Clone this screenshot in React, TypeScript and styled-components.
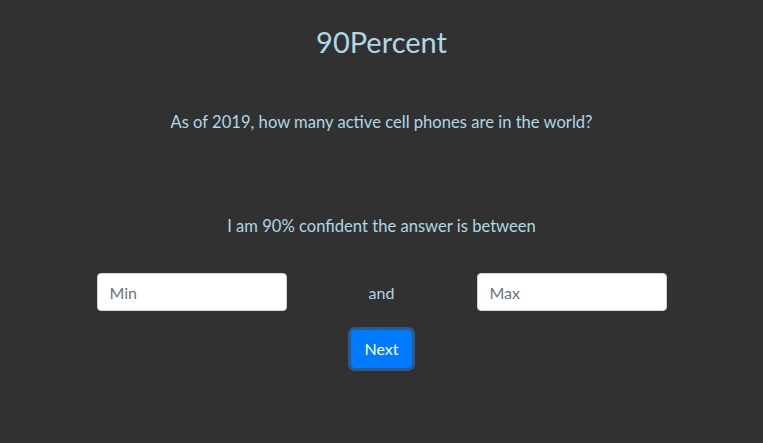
import React from "react";
import styled, { createGlobalStyle } from "styled-components";

const Global = createGlobalStyle`
  html, body {
    margin: 0;
    padding: 0;
    background: #313131;
  }
  body {
    font-family: "Gill Sans", "Gill Sans MT", Lato, "Noto Sans", sans-serif;
    color: #add8e6;
  }
  * { box-sizing: border-box; }
`;

const Page = styled.main`
  min-height: 443px;
  display: flex;
  flex-direction: column;
  align-items: center;
  padding-top: 23px;
`;

const Title = styled.h1`
  margin: 0;
  font-size: 29px;
  line-height: 38px;
  font-weight: 400;
  color: #add8e6;
`;

const Text = styled.p<{ $gap: number }>`
  margin: ${(p) => p.$gap}px 0 0;
  font-size: 16.6px;
  line-height: 24px;
  text-align: center;
`;

const Row = styled.div`
  margin-top: 35px;
  width: 570px;
  display: grid;
  grid-template-columns: repeat(3, 1fr);
  align-items: center;
`;

const Field = styled.input`
  width: 190px;
  height: 38px;
  padding: 6px 12px;
  border: 1px solid #ced4da;
  border-radius: 4px;
  background: #fff;
  font-family: inherit;
  font-size: 16px;
  color: #495057;
  outline: none;
  &::placeholder {
    color: #6c757d;
  }
`;

const And = styled.span`
  text-align: center;
  font-size: 16px;
  line-height: 24px;
  padding-top: 2px;
`;

const Button = styled.button`
  margin-top: 19px;
  height: 38px;
  padding: 6px 12px;
  border: 1px solid #007bff;
  border-radius: 4px;
  background: #007bff;
  color: #fff;
  font-family: inherit;
  font-size: 16px;
  line-height: 24px;
  box-shadow: 0 0 0 3px rgba(38, 143, 255, 0.45);
  cursor: pointer;
`;

export default function App() {
  return (
    <>
      <Global />
      <Page>
        <Title>90Percent</Title>
        <Text $gap={49}>As of 2019, how many active cell phones are in the world?</Text>
        <Text $gap={80}>I am 90% confident the answer is between</Text>
        <Row>
          <Field placeholder="Min" />
          <And>and</And>
          <Field placeholder="Max" />
        </Row>
        <Button>Next</Button>
      </Page>
    </>
  );
}
